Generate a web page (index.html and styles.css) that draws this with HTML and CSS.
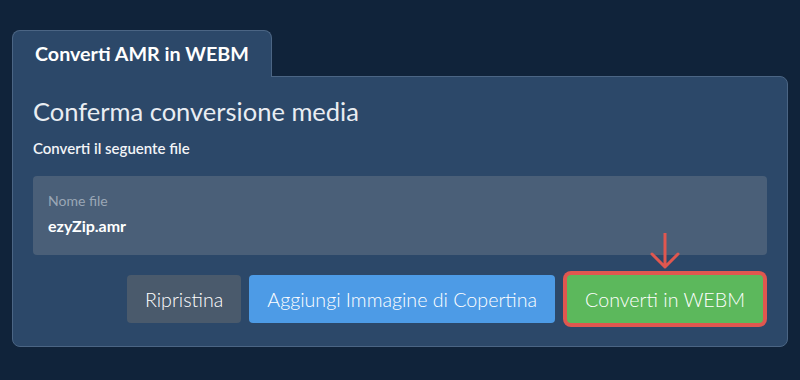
FILE: index.html
```html
<!DOCTYPE html>
<html lang="it">
<head>
  <meta charset="UTF-8" />
  <meta name="viewport" content="width=device-width, initial-scale=1.0"/>
  <title>Converti AMR in WEBM</title>
  <link rel="stylesheet" href="styles.css">
</head>
<body>
  <div class="panel">
    <div class="tab">Converti AMR in WEBM</div>

    <div class="card">
      <h2 class="title">Conferma conversione media</h2>
      <div class="subtitle">Converti il seguente file</div>

      <div class="file-box">
        <div class="file-label">Nome file</div>
        <div class="file-name">ezyZip.amr</div>
      </div>

      <div class="actions">
        <button class="btn btn-reset">Ripristina</button>
        <button class="btn btn-cover">Aggiungi Immagine di Copertina</button>
        <span class="convert-wrap">
          <svg class="pointer" width="30" height="36" viewBox="0 0 30 36">
            <path d="M15 0 V34 M2 21 L15 34 L28 21" fill="none" stroke="#e0574f" stroke-width="3" stroke-linecap="round" stroke-linejoin="round"/>
          </svg>
          <button class="btn btn-convert">Converti in WEBM</button>
        </span>
      </div>
    </div>
  </div>
</body>
</html>
```

FILE: styles.css
```css
:root {
  --bg: #10233a;
  --card: #2c4869;
  --border: #4b6584;
  --field: #4a5f78;
  --text: #f2f4f7;
  --muted: #9aa7b6;
  --red: #e0574f;
}

body {
  margin: 0;
  padding: 30px 12px;
  background: var(--bg);
  color: var(--text);
  font-family: Lato, "Open Sans", sans-serif;
}

.panel {
  display: flex;
  flex-direction: column;
  align-items: flex-start;
}

.tab {
  position: relative;
  z-index: 1;
  height: 46px;
  line-height: 46px;
  padding: 0 22px;
  margin-bottom: -1px;
  background: var(--card);
  border: 1px solid var(--border);
  border-bottom: none;
  border-radius: 8px 8px 0 0;
  font-size: 19.7px;
  font-weight: bold;
  color: #fff;
}

.card {
  align-self: stretch;
  background: var(--card);
  border: 1px solid var(--border);
  border-radius: 0 8px 8px 8px;
  padding: 19px 20px 23px;
}

.title {
  margin: 0;
  font-size: 25.5px;
  font-weight: normal;
  line-height: 31px;
  color: #e9edf2;
}

.subtitle {
  margin-top: 11px;
  font-size: 15px;
  font-weight: 600;
  line-height: 20px;
}

.file-box {
  margin-top: 18px;
  padding: 17px 15px 19px;
  background: var(--field);
  border-radius: 4px;
}

.file-label {
  font-size: 14px;
  line-height: 16px;
  color: var(--muted);
}

.file-name {
  margin-top: 7px;
  font-size: 16px;
  font-weight: bold;
  line-height: 20px;
  color: #fff;
}

.actions {
  display: flex;
  justify-content: flex-end;
  gap: 8px;
  margin-top: 20px;
  padding-right: 4px;
}

.btn {
  height: 48px;
  padding: 0 18px;
  border: none;
  border-radius: 4px;
  font-family: inherit;
  font-size: 19.65px;
  font-weight: 300;
  color: #fff;
  cursor: pointer;
}

.btn-reset {
  background: #4a5a6c;
}

.btn-cover {
  background: #4d9be6;
}

.convert-wrap {
  position: relative;
  margin-left: 4px;
  display: flex;
}

.btn-convert {
  background: #5cb85c;
  box-shadow: 0 0 0 4px var(--red);
}

.pointer {
  position: absolute;
  top: -42px;
  left: 50%;
  transform: translateX(-50%);
}
```
